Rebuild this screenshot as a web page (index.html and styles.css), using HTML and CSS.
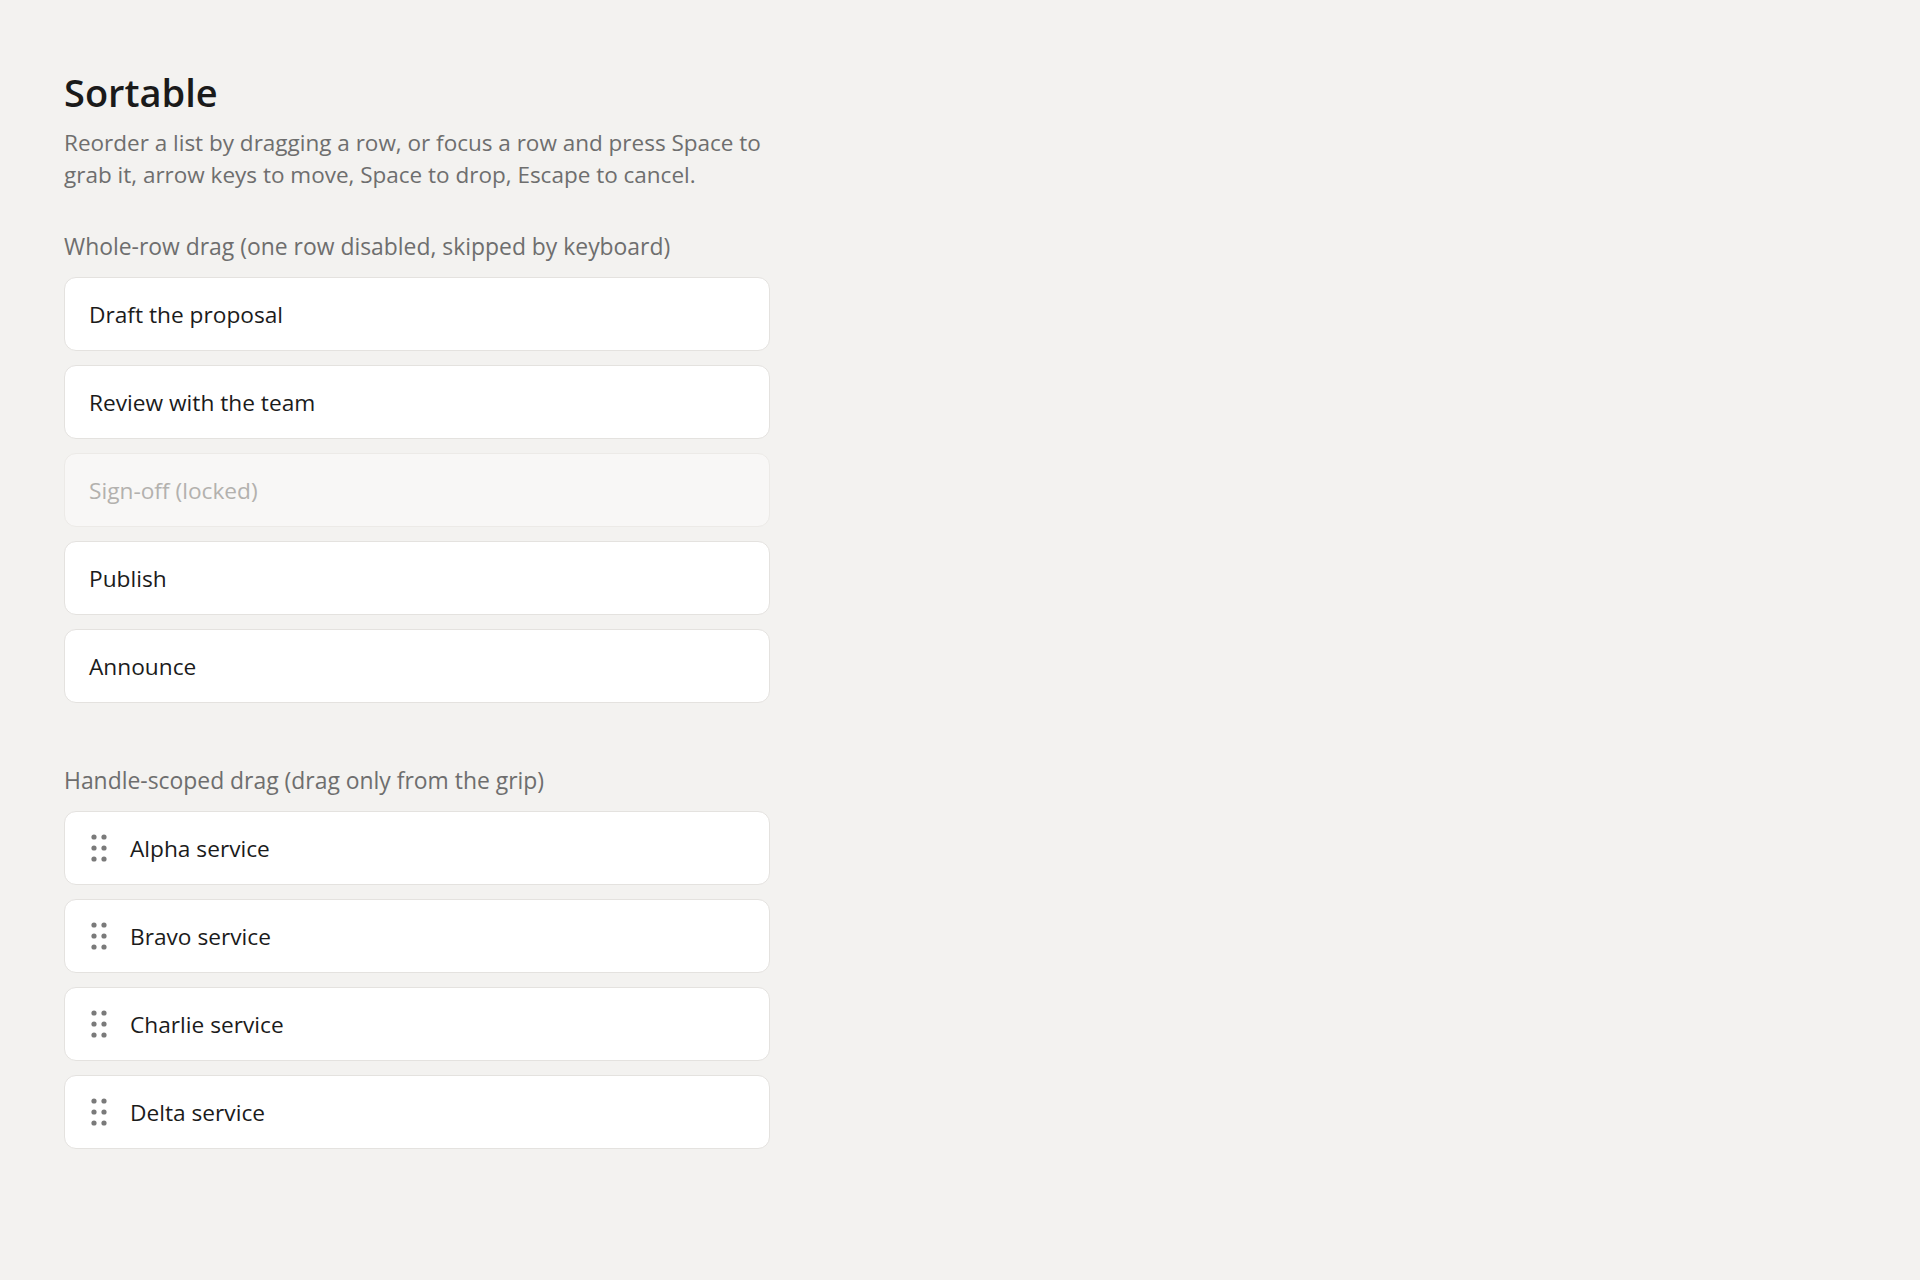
FILE: index.html
```html
<!DOCTYPE html>
<html lang="en">
<head>
<meta charset="utf-8">
<title>Sortable</title>
<link rel="stylesheet" href="styles.css">
</head>
<body>
<main class="page">
  <h1 class="title">Sortable</h1>
  <p class="lead">Reorder a list by dragging a row, or focus a row and press Space to grab it, arrow keys to move, Space to drop, Escape to cancel.</p>

  <section class="group">
    <h2 class="group-label">Whole-row drag (one row disabled, skipped by keyboard)</h2>
    <ul class="sortable">
      <li class="item" tabindex="0">Draft the proposal</li>
      <li class="item" tabindex="0">Review with the team</li>
      <li class="item item-disabled" aria-disabled="true">Sign-off (locked)</li>
      <li class="item" tabindex="0">Publish</li>
      <li class="item" tabindex="0">Announce</li>
    </ul>
  </section>

  <section class="group group-spaced">
    <h2 class="group-label">Handle-scoped drag (drag only from the grip)</h2>
    <ul class="sortable">
      <li class="item item-handle">
        <span class="grip" tabindex="0" aria-label="Drag Alpha service"><svg viewBox="0 0 20 28" width="20" height="28"><circle cx="5" cy="3" r="2.6"/><circle cx="15" cy="3" r="2.6"/><circle cx="5" cy="14" r="2.6"/><circle cx="15" cy="14" r="2.6"/><circle cx="5" cy="25" r="2.6"/><circle cx="15" cy="25" r="2.6"/></svg></span>
        <span class="item-text">Alpha service</span>
      </li>
      <li class="item item-handle">
        <span class="grip" tabindex="0" aria-label="Drag Bravo service"><svg viewBox="0 0 20 28" width="20" height="28"><circle cx="5" cy="3" r="2.6"/><circle cx="15" cy="3" r="2.6"/><circle cx="5" cy="14" r="2.6"/><circle cx="15" cy="14" r="2.6"/><circle cx="5" cy="25" r="2.6"/><circle cx="15" cy="25" r="2.6"/></svg></span>
        <span class="item-text">Bravo service</span>
      </li>
      <li class="item item-handle">
        <span class="grip" tabindex="0" aria-label="Drag Charlie service"><svg viewBox="0 0 20 28" width="20" height="28"><circle cx="5" cy="3" r="2.6"/><circle cx="15" cy="3" r="2.6"/><circle cx="5" cy="14" r="2.6"/><circle cx="15" cy="14" r="2.6"/><circle cx="5" cy="25" r="2.6"/><circle cx="15" cy="25" r="2.6"/></svg></span>
        <span class="item-text">Charlie service</span>
      </li>
      <li class="item item-handle">
        <span class="grip" tabindex="0" aria-label="Drag Delta service"><svg viewBox="0 0 20 28" width="20" height="28"><circle cx="5" cy="3" r="2.6"/><circle cx="15" cy="3" r="2.6"/><circle cx="5" cy="14" r="2.6"/><circle cx="15" cy="14" r="2.6"/><circle cx="5" cy="25" r="2.6"/><circle cx="15" cy="25" r="2.6"/></svg></span>
        <span class="item-text">Delta service</span>
      </li>
    </ul>
  </section>
</main>
</body>
</html>
```
FILE: styles.css
```css
* {
  box-sizing: border-box;
}

html,
body {
  margin: 0;
  padding: 0;
  background: #f3f2f0;
}

body {
  font-family: "Segoe UI", "Open Sans", "Noto Sans", sans-serif;
  color: #1b1b1b;
  min-height: 1280px;
}

.page {
  width: 706px;
  margin-left: 64px;
  padding-top: 68px;
}

.title {
  margin: 0;
  font-size: 38px;
  line-height: 48px;
  font-weight: 600;
  color: #1a1a1a;
}

.lead {
  margin: 11px 0 0;
  font-size: 22.5px;
  line-height: 32px;
  color: #6e6e6e;
}

.group {
  margin-top: 40px;
}

.group-spaced {
  margin-top: 62px;
}

.group-label {
  margin: 0 0 14px;
  font-size: 22.9px;
  line-height: 32px;
  font-weight: 400;
  color: #6e6e6e;
}

.sortable {
  list-style: none;
  margin: 0;
  padding: 0;
  display: flex;
  flex-direction: column;
  gap: 14px;
}

.item {
  display: flex;
  align-items: center;
  gap: 21px;
  height: 74px;
  padding: 0 24px;
  background: #ffffff;
  border: 1.5px solid #e4e2df;
  border-radius: 12px;
  font-size: 22.7px;
  color: #1b1b1b;
  cursor: grab;
  outline: none;
}

.item-disabled {
  background: #f8f7f6;
  border-color: #eceae7;
  color: #b3b1ae;
  cursor: not-allowed;
}

.item-handle {
  cursor: default;
}

.grip {
  display: flex;
  align-items: center;
  width: 20px;
  height: 28px;
  cursor: grab;
}

.grip svg {
  display: block;
  fill: #7a7a7a;
}
```
